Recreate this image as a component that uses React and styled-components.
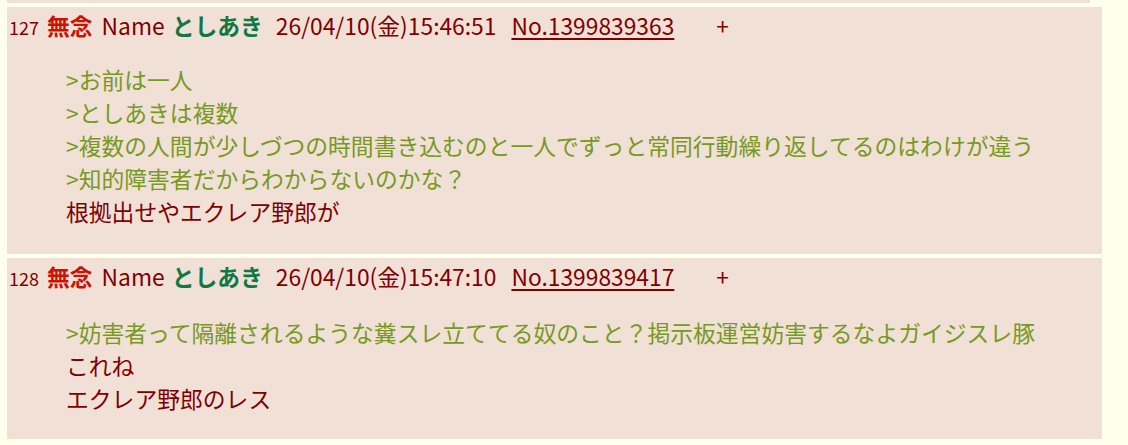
import React from "react";
import styled, { createGlobalStyle } from "styled-components";

const Global = createGlobalStyle`
  html, body { margin: 0; padding: 0; background: #ffffee; }
  body {
    font-family: "Noto Sans CJK JP", "Noto Sans", sans-serif;
    color: #800000;
    font-size: 22.8px;
  }
`;

const Thread = styled.div`
  padding: 0 0 0 7px;
  display: flex;
  flex-direction: column;
  align-items: flex-start;
  gap: 4px;
`;

const PrevTail = styled.div`
  width: 1083px;
  height: 3px;
  background: #f0e0d6;
`;

const Reply = styled.div`
  width: 1095px;
  box-sizing: border-box;
  background: #f0e0d6;
  padding: 2px 0 ${(p) => p.$pb}px 2px;
`;

const Header = styled.div`
  display: flex;
  align-items: baseline;
  white-space: nowrap;
  line-height: 33px;
`;

const Num = styled.span`
  font-size: 18px;
  margin-right: 8px;
`;

const Title = styled.span`
  color: #cc1105;
  font-weight: bold;
  margin-right: 9px;
`;

const Label = styled.span`
  margin-right: 7px;
`;

const Poster = styled.span`
  color: #117743;
  font-weight: bold;
  margin-right: 13px;
`;

const DateText = styled.span`
  margin-right: 15px;
`;

const PostNo = styled.a`
  color: #800000;
  text-decoration: underline;
  text-underline-offset: 3px;
  cursor: pointer;
`;

const DelLink = styled.a`
  margin-left: 42px;
  color: #800000;
  text-decoration: none;
  cursor: pointer;
`;

const Body = styled.div`
  margin: ${(p) => p.$mt}px 0 0 57px;
  line-height: 33px;
`;

const Line = styled.div`
  color: ${(p) => (p.$quote ? "#789922" : "#800000")};
  white-space: nowrap;
`;

const posts = [
  {
    no: "127",
    date: "26/04/10(金)15:46:51",
    id: "No.1399839363",
    mt: 19,
    pb: 26,
    lines: [
      { q: true, t: ">お前は一人" },
      { q: true, t: ">としあきは複数" },
      { q: true, t: ">複数の人間が少しづつの時間書き込むのと一人でずっと常同行動繰り返してるのはわけが違う" },
      { q: true, t: ">知的障害者だからわからないのかな？" },
      { q: false, t: "根拠出せやエクレア野郎が" },
    ],
  },
  {
    no: "128",
    date: "26/04/10(金)15:47:10",
    id: "No.1399839417",
    mt: 21,
    pb: 24,
    lines: [
      { q: true, t: ">妨害者って隔離されるような糞スレ立ててる奴のこと？掲示板運営妨害するなよガイジスレ豚" },
      { q: false, t: "これね" },
      { q: false, t: "エクレア野郎のレス" },
    ],
  },
];

export default function App() {
  return (
    <>
      <Global />
      <Thread>
        <PrevTail />
        {posts.map((p) => (
          <Reply key={p.no} $pb={p.pb}>
            <Header>
              <Num>{p.no}</Num>
              <Title>無念</Title>
              <Label>Name</Label>
              <Poster>としあき</Poster>
              <DateText>{p.date}</DateText>
              <PostNo>{p.id}</PostNo>
              <DelLink>+</DelLink>
            </Header>
            <Body $mt={p.mt}>
              {p.lines.map((l, i) => (
                <Line key={i} $quote={l.q}>{l.t}</Line>
              ))}
            </Body>
          </Reply>
        ))}
      </Thread>
    </>
  );
}
